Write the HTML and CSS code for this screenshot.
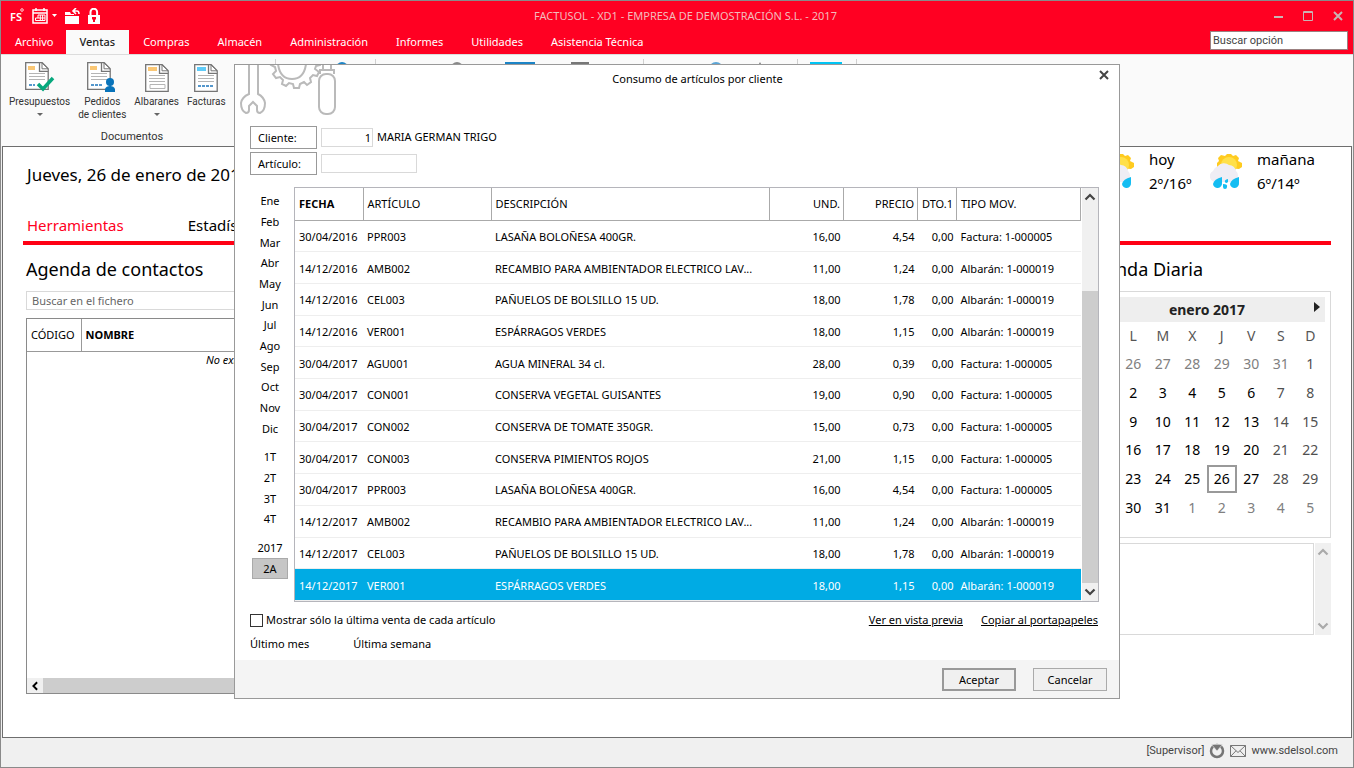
FILE: index.html
```html
<!DOCTYPE html>
<html lang="es">
<head>
  <meta charset="UTF-8">
  <meta name="viewport" content="width=device-width, initial-scale=1.0">
  <title>FACTUSOL - XD1 - EMPRESA DE DEMOSTRACIÓN S.L. - 2017</title>
  <link rel="stylesheet" href="styles.css">
</head>
<body>
  <!-- shared icon parts -->
  <svg class="defs" width="0" height="0" aria-hidden="true">
    <symbol id="doc" viewBox="0 0 24 28">
      <path d="M.7.7h16.5l6 6v20.6H.7z" fill="#fff" stroke="#757575" stroke-width="1.3"/>
      <path d="M14.5.7v8.6h8.7" fill="#fff" stroke="#757575" stroke-width="1.3"/>
      <path d="M17 1v5.8h6z" fill="#fff" stroke="#757575"/>
      <path d="M4 11.5h16M4 14.5h16M4 17.5h16" stroke="#b5b5b5" stroke-width="1"/>
    </symbol>
    <symbol id="weather" viewBox="0 0 34 36">
      <path d="M15 3l2-2h4l2 2 3-1 3 3-1 3 4 2v4l-3 2-22-2v-4l2-2-1-3 3-3z" fill="#ffcb1f"/>
      <circle cx="19" cy="12" r="8" fill="#ffe04a"/>
      <path d="M4 29a6 6 0 0 1-1-11 8 8 0 0 1 5-5 8 8 0 0 1 11-1 7 7 0 0 1 7 6 6 6 0 0 1 0 9l-4 2z" fill="#efedf4"/>
      <path d="M12 24v6a4 4 0 0 1-9 1q1-5 9-7zM29 24v6a4 4 0 0 1-9 1q1-5 9-7zM13 31q5 0 4 3a2 2 0 0 1-4 0zM18 26q-4 1-3 3t3 0z" fill="#14bdf2"/>
    </symbol>
    <symbol id="up" viewBox="0 0 8 8"><path d="M1 5.700L4 2.700l3 3" fill="none" stroke="currentColor" stroke-width="1.500"/></symbol>
    <symbol id="cross" viewBox="0 0 10 10"><path d="M1 1l8 8M9 1L1 9" stroke="currentColor" stroke-width="2"/></symbol>
  </svg>

  <header class="titlebar">
    <div class="title-row">
      <div class="quick">
        <button aria-label="Factusol"><svg width="18" height="18" viewBox="0 0 18 18"><text x="2" y="14" font-size="11" font-weight="600" fill="#fff">FS</text><circle cx="14" cy="3" r="1.300" fill="none" stroke="#fff" stroke-width=".8"/></svg></button>
        <button aria-label="Calendario"><svg width="26" height="16" viewBox="0 0 26 16"><path d="M1 2h14v13H1zM1 5h14M4 0v3M12 0v3" fill="none" stroke="#fff" stroke-width="1.500"/><path d="M3.500 12.500V10H6V7h7v5.500zM6 10h7M8.300 7v5.500M10.600 7v5.500" fill="none" stroke="#fff"/><path d="M20 6h5l-2.500 3z" fill="#fff"/></svg></button>
        <button aria-label="Cambiar empresa"><svg width="17" height="16" viewBox="0 0 17 16"><path d="M1 4h5l1 2h3v1H1zM1 8h14v8H1z" fill="#fff"/><path d="M9 3h4q2 0 2 3M12 0L9 3l3 3" fill="none" stroke="#fff" stroke-width="1.600"/></svg></button>
        <button aria-label="Bloquear"><svg width="14" height="16" viewBox="0 0 14 16"><path d="M3.500 7V4a3.300 3.300 0 0 1 6.600 0v3" fill="none" stroke="#fff" stroke-width="2"/><path d="M1 7h12v9H1z" fill="#fff"/><path d="M5 9h4v2.500H8V14H6v-2.500H5z" fill="#ff0022"/></svg></button>
      </div>
      <h1>FACTUSOL - XD1 - EMPRESA DE DEMOSTRACIÓN S.L. - 2017</h1>
      <div class="window-buttons">
        <button aria-label="Minimizar"><svg width="10" height="10"><path d="M0 6h9" stroke="currentColor" stroke-width="2"/></svg></button>
        <button aria-label="Maximizar"><svg width="11" height="10"><path d="M.5.500h9v9h-9zM0 1.500h10" fill="none" stroke="currentColor"/></svg></button>
        <button aria-label="Cerrar"><svg width="10" height="10"><use href="#cross"/></svg></button>
      </div>
    </div>
    <div class="tab-row">
      <nav class="tabs">
        <a href="#">Archivo</a>
        <a href="#" class="active">Ventas</a>
        <a href="#">Compras</a>
        <a href="#">Almacén</a>
        <a href="#">Administración</a>
        <a href="#">Informes</a>
        <a href="#">Utilidades</a>
        <a href="#">Asistencia Técnica</a>
      </nav>
      <input class="search-option" type="text" placeholder="Buscar opción" aria-label="Buscar opción">
    </div>
  </header>

  <div class="ribbon">
    <section class="group documents">
      <div class="tools">
        <button>
          <svg width="30" height="30" viewBox="0 0 30 30"><use href="#doc" width="24" height="28"/><path d="M3 4h7v4H3z" fill="#fac775"/><path d="M4 23h6" stroke="#1c75bc" stroke-width="1.500" stroke-dasharray="3 1"/><path d="M13 22l5 5 10-11" fill="none" stroke="#07a87d" stroke-width="3.500"/></svg>
          Presupuestos
          <i class="caret"></i>
        </button>
        <button>
          <svg width="30" height="30" viewBox="0 0 30 30"><use href="#doc" width="24" height="28"/><path d="M3 4h7v4H3z" fill="#fac775"/><path d="M4 23h12" stroke="#1c75bc" stroke-width="1.500" stroke-dasharray="3 1"/><circle cx="23" cy="20" r="4" fill="#0873ba"/><path d="M18 30v-3q1-3 5-3t5 3v3z" fill="#0873ba"/></svg>
          Pedidos<br>de clientes
        </button>
        <button>
          <svg width="24" height="30" viewBox="0 0 24 30"><use href="#doc" y="2" width="24" height="28"/><path d="M3 5h9v4H3z" fill="#fac775"/><path d="M5 22.500h15v4H5z" fill="#fff" stroke="#b5b5b5"/></svg>
          Albaranes
          <i class="caret"></i>
        </button>
        <button>
          <svg width="24" height="30" viewBox="0 0 24 30"><use href="#doc" y="2" width="24" height="28"/><path d="M3 5h9v4H3z" fill="#5fcbf8"/><path d="M4 24h16" stroke="#1c75bc" stroke-width="1.500" stroke-dasharray="3 1"/></svg>
          Facturas
        </button>
      </div>
      <h2>Documentos</h2>
    </section>
    <section class="group group-b"><svg width="24" height="28"><circle cx="12" cy="6" r="6" fill="#1c84c6"/></svg></section>
    <section class="group group-c">
      <svg width="24" height="28"><circle cx="12" cy="6" r="6" fill="#888"/></svg>
      <svg width="30" height="28"><path d="M0 0h30v24H0z" fill="#1c84c6"/></svg>
      <svg width="18" height="28"><path d="M0 0h18v24H0z" fill="#777"/></svg>
    </section>
    <section class="group group-d">
      <svg width="24" height="28"><circle cx="12" cy="7" r="7" fill="#5aa5d6"/></svg>
      <svg width="24" height="28"><path d="M12 0l9 20H3z" fill="#666"/></svg>
    </section>
    <section class="group group-e"><svg width="32" height="28"><path d="M0 0h32v24H0z" fill="#00c4f4"/></svg></section>
  </div>

  <main class="desktop">
    <div class="day-row">
      <p class="date">Jueves, 26 de enero de 2017</p>
      <div class="weather">
        <svg width="34" height="36"><use href="#weather"/></svg>
        <p>hoy<br>2º/16º</p>
      </div>
      <div class="weather">
        <svg width="34" height="36"><use href="#weather"/></svg>
        <p>mañana<br>6º/14º</p>
      </div>
    </div>
    <nav class="sections">
      <a href="#" class="active">Herramientas</a>
      <a href="#">Estadísticas</a>
    </nav>
    <div class="panels">
      <section class="contacts">
        <h2>Agenda de contactos</h2>
        <input type="text" placeholder="Buscar en el fichero" aria-label="Buscar en el fichero">
        <div class="contact-list">
          <table>
            <thead><tr><th class="code">CÓDIGO</th><th class="name">NOMBRE</th></tr></thead>
            <tbody><tr><td colspan="2">No existen datos para mostrar</td></tr></tbody>
          </table>
          <div class="hscroll"><svg class="left" width="10" height="10"><use href="#up"/></svg><span></span></div>
        </div>
      </section>
      <section class="diary">
        <h2>Agenda Diaria</h2>
        <div class="calendar">
          <div class="month">
            enero 2017
            <button aria-label="Mes siguiente"><svg width="6" height="10"><path d="M0 0l6 5-6 5z" fill="#222"/></svg></button>
          </div>
          <table>
            <thead><tr><th></th><th>L</th><th>M</th><th>X</th><th>J</th><th>V</th><th>S</th><th>D</th></tr></thead>
            <tbody>
              <tr><td></td><td class="out">26</td><td class="out">27</td><td class="out">28</td><td class="out">29</td><td class="out">30</td><td class="out">31</td><td class="weekend">1</td></tr>
              <tr><td></td><td>2</td><td>3</td><td>4</td><td>5</td><td>6</td><td class="weekend">7</td><td class="weekend">8</td></tr>
              <tr><td></td><td>9</td><td>10</td><td>11</td><td>12</td><td>13</td><td class="weekend">14</td><td class="weekend">15</td></tr>
              <tr><td></td><td>16</td><td>17</td><td>18</td><td>19</td><td>20</td><td class="weekend">21</td><td class="weekend">22</td></tr>
              <tr><td></td><td>23</td><td>24</td><td>25</td><td class="today">26</td><td>27</td><td class="weekend">28</td><td class="weekend">29</td></tr>
              <tr><td></td><td>30</td><td>31</td><td class="out">1</td><td class="out">2</td><td class="out">3</td><td class="out">4</td><td class="out">5</td></tr>
            </tbody>
          </table>
        </div>
        <div class="notes">
          <textarea aria-label="Notas del día"></textarea>
          <div class="vscroll"><svg width="12" height="12"><use href="#up"/></svg><svg class="down" width="12" height="12"><use href="#up"/></svg></div>
        </div>
      </section>
    </div>
  </main>

  <footer class="statusbar">
    <span>[Supervisor]</span>
    <svg width="16" height="16" viewBox="0 0 16 16"><circle cx="8" cy="8" r="6" fill="none" stroke="#757575" stroke-width="2.500"/><path d="M2.500 1.500h11L8 8z" fill="#757575" stroke="#f0f0f0" stroke-width=".6"/></svg>
    <svg width="16" height="12" viewBox="0 0 16 12"><path d="M.5.500h15v11H.5zl7.500 7 7.500-7M.5 11.500L6 5.800M15.500 11.500L10 5.800" fill="none" stroke="#777"/></svg>
    <a href="#">www.sdelsol.com</a>
  </footer>

  <div class="dialog" role="dialog" aria-labelledby="dialog-title">
    <header class="dialog-head">
      <svg width="98" height="52" viewBox="0 0 98 52" fill="none" stroke="#bababa" stroke-width="2">
        <path d="M9 0v29q-7 3-8 9 0 8 5 10 3 0 3-3v-4l4-4 4 4v4q0 3 3 3 5-2 5-10-1-6-7-9V0"/>
        <path d="M32-3l-1 3 4 2 1 4-3 3 3 4 4-1 3 3-1 4 4 2 3-3 4 1 1 4h5l1-4 4-2 3 3 4-3-1-4 3-3 4 1 2-4-4-3 1-3 4-1v-3"/>
        <path d="M38-1q2 15 14 15T66-1"/>
        <path d="M83 0v5h-3v4M91 0v5h3v4M83 5h8"/>
        <rect x="79" y="9" width="16" height="40" rx="7"/>
      </svg>
      <h2 id="dialog-title">Consumo de artículos por cliente</h2>
      <button class="close" aria-label="Cerrar"><svg width="10" height="10"><use href="#cross"/></svg></button>
    </header>

    <div class="filters">
      <button type="button">Cliente:</button>
      <input class="client" type="text" value="1" aria-label="Cliente">
      <span>MARIA GERMAN TRIGO</span>
    </div>
    <div class="filters">
      <button type="button">Artículo:</button>
      <input class="article" type="text" aria-label="Artículo">
    </div>

    <div class="content">
      <div class="periods">
        <div class="months">
          <button>Ene</button><button>Feb</button><button>Mar</button><button>Abr</button>
          <button>May</button><button>Jun</button><button>Jul</button><button>Ago</button>
          <button>Sep</button><button>Oct</button><button>Nov</button><button>Dic</button>
        </div>
        <div class="quarters">
          <button>1T</button><button>2T</button><button>3T</button><button>4T</button>
        </div>
        <div class="years">
          <button>2017</button><button class="active">2A</button>
        </div>
      </div>

      <div class="grid">
        <table>
          <colgroup><col class="c-date"><col class="c-item"><col><col class="c-num"><col class="c-num"><col class="c-disc"><col class="c-type"></colgroup>
          <thead>
            <tr><th class="sorted">FECHA</th><th>ARTÍCULO</th><th>DESCRIPCIÓN</th><th class="num">UND.</th><th class="num">PRECIO</th><th class="num">DTO.1</th><th>TIPO MOV.</th></tr>
          </thead>
          <tbody>
            <tr><td>30/04/2016</td><td>PPR003</td><td>LASAÑA BOLOÑESA 400GR.</td><td class="num">16,00</td><td class="num">4,54</td><td class="num">0,00</td><td>Factura: 1-000005</td></tr>
            <tr><td>14/12/2016</td><td>AMB002</td><td>RECAMBIO PARA AMBIENTADOR ELECTRICO LAV...</td><td class="num">11,00</td><td class="num">1,24</td><td class="num">0,00</td><td>Albarán: 1-000019</td></tr>
            <tr><td>14/12/2016</td><td>CEL003</td><td>PAÑUELOS DE BOLSILLO 15 UD.</td><td class="num">18,00</td><td class="num">1,78</td><td class="num">0,00</td><td>Albarán: 1-000019</td></tr>
            <tr><td>14/12/2016</td><td>VER001</td><td>ESPÁRRAGOS VERDES</td><td class="num">18,00</td><td class="num">1,15</td><td class="num">0,00</td><td>Albarán: 1-000019</td></tr>
            <tr><td>30/04/2017</td><td>AGU001</td><td>AGUA MINERAL 34 cl.</td><td class="num">28,00</td><td class="num">0,39</td><td class="num">0,00</td><td>Factura: 1-000005</td></tr>
            <tr><td>30/04/2017</td><td>CON001</td><td>CONSERVA VEGETAL GUISANTES</td><td class="num">19,00</td><td class="num">0,90</td><td class="num">0,00</td><td>Factura: 1-000005</td></tr>
            <tr><td>30/04/2017</td><td>CON002</td><td>CONSERVA DE TOMATE 350GR.</td><td class="num">15,00</td><td class="num">0,73</td><td class="num">0,00</td><td>Factura: 1-000005</td></tr>
            <tr><td>30/04/2017</td><td>CON003</td><td>CONSERVA PIMIENTOS ROJOS</td><td class="num">21,00</td><td class="num">1,15</td><td class="num">0,00</td><td>Factura: 1-000005</td></tr>
            <tr><td>30/04/2017</td><td>PPR003</td><td>LASAÑA BOLOÑESA 400GR.</td><td class="num">16,00</td><td class="num">4,54</td><td class="num">0,00</td><td>Factura: 1-000005</td></tr>
            <tr><td>14/12/2017</td><td>AMB002</td><td>RECAMBIO PARA AMBIENTADOR ELECTRICO LAV...</td><td class="num">11,00</td><td class="num">1,24</td><td class="num">0,00</td><td>Albarán: 1-000019</td></tr>
            <tr><td>14/12/2017</td><td>CEL003</td><td>PAÑUELOS DE BOLSILLO 15 UD.</td><td class="num">18,00</td><td class="num">1,78</td><td class="num">0,00</td><td>Albarán: 1-000019</td></tr>
            <tr class="selected"><td>14/12/2017</td><td>VER001</td><td>ESPÁRRAGOS VERDES</td><td class="num">18,00</td><td class="num">1,15</td><td class="num">0,00</td><td>Albarán: 1-000019</td></tr>
          </tbody>
        </table>
        <div class="vscroll"><svg width="12" height="12"><use href="#up"/></svg><span></span><svg class="down" width="12" height="12"><use href="#up"/></svg></div>
      </div>
    </div>

    <div class="options">
      <input type="checkbox" id="last-sale">
      <label for="last-sale">Mostrar sólo la última venta de cada artículo</label>
      <a href="#">Ver en vista previa</a>
      <a href="#">Copiar al portapapeles</a>
    </div>
    <div class="ranges">
      <button>Último mes</button>
      <button>Última semana</button>
    </div>

    <footer class="dialog-foot">
      <button class="default">Aceptar</button>
      <button>Cancelar</button>
    </footer>
  </div>
</body>
</html>
```

FILE: styles.css
```css
* {
  box-sizing: border-box;
}

body {
  margin: 0;
  min-height: 100vh;
  position: relative;
  display: flex;
  flex-direction: column;
  border: 1px solid #8a8a8a;
  background: #f0f0f0;
  color: #000;
  font-family: "Noto Sans", "Open Sans", sans-serif;
  font-size: 11px;
  line-height: 16px;
}

h1, h2, p {
  margin: 0;
  font-weight: normal;
}

button {
  padding: 0;
  border: 0;
  background: none;
  color: inherit;
  font: inherit;
}

input, textarea {
  font: inherit;
  border: 1px solid #d9d9d9;
  background: #fff;
}

a {
  color: inherit;
  text-decoration: none;
}

svg {
  display: block;
}

.defs {
  position: absolute;
}

table {
  border-collapse: collapse;
}

th {
  font-weight: normal;
}

/* title bar */
.titlebar {
  background: #ff0022;
  color: #fff;
}

.title-row {
  height: 29px;
  display: grid;
  grid-template-columns: 1fr auto 1fr;
  align-items: center;
  padding: 0 10px 0 7px;
}

.quick {
  display: flex;
  align-items: center;
  gap: 6px;
}

h1 {
  padding-left: 20px;
  font-size: 11px;
  line-height: 16px;
  color: #f3bcbc;
}

.window-buttons {
  display: flex;
  justify-content: flex-end;
  gap: 19px;
  color: #c9b3b3;
}

.tab-row {
  height: 24px;
  display: flex;
  justify-content: space-between;
  padding-right: 5px;
}

.tabs {
  display: flex;
}

.tabs a {
  padding: 4px 14px;
}

.tabs a:first-child {
  padding-right: 12px;
}

.tabs .active {
  background: #fafafa;
  color: #222;
  font-weight: 500;
}

.search-option {
  width: 138px;
  height: 19px;
  margin-top: 1px;
  padding: 0 2px;
  border-color: #9b8080;
  font-family: Roboto, sans-serif;
}

.search-option::placeholder {
  color: #444;
}

/* ribbon */
.ribbon {
  height: 92px;
  display: flex;
  padding-top: 4px;
  border-top: 1px solid #dcdcdc;
  background: #fafafa;
  color: #333;
  font-family: Roboto, sans-serif;
  font-size: 10px;
  line-height: 13px;
}

.group {
  display: flex;
  padding-top: 3px;
  border-right: 1px solid #d0d0d0;
}

.documents {
  width: 275px;
  flex-direction: column;
  justify-content: space-between;
  padding-bottom: 3px;
}

.documents h2 {
  padding-right: 12px;
  font-size: 11px;
  text-align: center;
}

.tools {
  display: flex;
  gap: 8px;
  padding-left: 8px;
  white-space: nowrap;
}

.tools button {
  display: flex;
  flex-direction: column;
  align-items: center;
  justify-content: flex-start;
}

.tools svg {
  margin-bottom: 3px;
}

.caret {
  margin-top: 5px;
  border: 3px solid transparent;
  border-top-color: #666;
}

.group-b {
  width: 100px;
  padding-left: 54px;
}

.group-c {
  width: 268px;
  padding-left: 69px;
  gap: 36px;
}

.group-d {
  width: 154px;
  padding-left: 60px;
  gap: 20px;
}

.group-e {
  width: 59px;
  padding-left: 12px;
}

/* desktop */
.desktop {
  flex: 1;
  display: flex;
  flex-direction: column;
  margin: 0 1px;
  padding: 0 20px 43px;
  border: 1px solid #6e6e6e;
  background: #fff;
}

.day-row {
  display: flex;
  align-items: flex-start;
  padding-right: 13px;
}

.date {
  flex: 1;
  padding: 16px 0 0 4px;
  font-size: 17px;
  line-height: 24px;
}

.weather {
  width: 108px;
  display: flex;
  gap: 13px;
  font-size: 15px;
  line-height: 24px;
}

.weather svg {
  margin-top: 6px;
}

.sections {
  display: flex;
  gap: 64px;
  margin-top: 12px;
  padding: 8px 4px 6px;
  border-bottom: 4px solid #ff0014;
  font-size: 15px;
  line-height: 20px;
}

.sections .active {
  color: #ff0022;
}

.panels {
  flex: 1;
  display: grid;
  grid-template-columns: 1fr 1fr 248px;
  padding-left: 3px;
}

.panels h2 {
  padding: 12px 0 10px;
  font-size: 18px;
  line-height: 24px;
}

.contacts {
  display: flex;
  flex-direction: column;
}

.contacts input {
  height: 19px;
  padding: 0 5px;
}

.contacts input::placeholder {
  color: #666;
}

.contact-list {
  flex: 1;
  display: flex;
  flex-direction: column;
  justify-content: space-between;
  margin-top: 8px;
  border: 1px solid #8a8a8a;
}

.contact-list table {
  width: 100%;
}

.contact-list th {
  height: 32px;
  padding: 0 4px;
  border-bottom: 1px solid #999;
  text-align: left;
}

.contact-list .code {
  width: 54px;
  border-right: 1px solid #999;
}

.contact-list .name {
  font-weight: bold;
}

.contact-list td {
  padding: 0 20px 0 0;
  font-style: italic;
  text-align: center;
}

.hscroll {
  height: 15px;
  display: flex;
  align-items: center;
  padding-left: 3px;
  gap: 3px;
  background: #f0f0f0;
}

.hscroll span {
  flex: 1;
  height: 15px;
  background: #cdcdcd;
}

.left {
  transform: rotate(-90deg);
}

.down {
  transform: rotate(180deg);
}

.diary {
  grid-column: 3;
}

.diary h2 {
  margin-right: 128px;
  text-align: right;
  white-space: nowrap;
}

.calendar {
  height: 247px;
  padding: 5px;
  border: 1px solid #d9d9d9;
}

.month {
  height: 25px;
  display: flex;
  align-items: center;
  justify-content: center;
  position: relative;
  background: #eee;
  color: #222;
  font-size: 14px;
  font-weight: bold;
}

.month button {
  position: absolute;
  right: 5px;
  top: 5px;
}

.calendar table {
  width: 100%;
  height: 200px;
  table-layout: fixed;
  font-size: 14px;
  text-align: center;
}

.calendar th,
.calendar td {
  height: 28px;
  padding: 0;
}

.calendar th {
  color: #555;
}

.calendar .out {
  color: #808080;
}

.calendar .weekend {
  color: #505050;
}

.calendar .today {
  outline: 2px solid #999;
  outline-offset: -2px;
}

.notes {
  display: flex;
  gap: 1px;
  margin-top: 5px;
}

.notes textarea {
  flex: 1;
  height: 92px;
  resize: none;
}

.vscroll {
  width: 16px;
  display: flex;
  flex-direction: column;
  align-items: center;
  justify-content: space-between;
  padding: 3px 0;
  background: #f0f0f0;
  color: #444;
}

.notes .vscroll {
  color: #aaa;
}

/* status bar */
.statusbar {
  height: 28px;
  display: flex;
  align-items: center;
  justify-content: flex-end;
  gap: 5px;
  margin-top: 1px;
  padding: 0 15px 5px 0;
  color: #444;
  font-family: Roboto, sans-serif;
}

/* dialog */
.dialog {
  position: absolute;
  top: 63px;
  left: 0;
  right: 0;
  width: 886px;
  max-width: 100%;
  margin: 0 auto;
  border: 1px solid #999;
  background: #fff;
}

.dialog-head {
  display: grid;
  grid-template-columns: 101px 1fr 65px;
  margin-bottom: 9px;
  padding-left: 5px;
}

.dialog-head h2 {
  padding-top: 6px;
  font-size: 11px;
  text-align: center;
}

.close {
  justify-self: end;
  align-self: start;
  margin: 5px 10px;
  color: #444;
}

.filters {
  height: 26px;
  display: flex;
  gap: 4px;
  padding-left: 15px;
}

.filters button {
  width: 67px;
  height: 23px;
  padding: 0 7px;
  border: 1px solid #999;
  text-align: left;
}

.filters input {
  height: 19px;
  margin-top: 2px;
  padding: 0 1px;
}

.filters span {
  padding-top: 3px;
}

.client {
  width: 52px;
  text-align: right;
}

.article {
  width: 96px;
}

.content {
  display: flex;
  gap: 6px;
  margin-top: 9px;
  padding: 0 20px 0 17px;
}

.periods {
  width: 36px;
  height: 388px;
  display: flex;
  flex-direction: column;
  gap: 8px;
  margin-top: 4px;
}

.periods div {
  display: grid;
  grid-auto-rows: 1fr;
}

.months {
  flex: 12 1 0;
}

.quarters {
  flex: 4 1 0;
}

.years {
  flex: 2 1 0;
}

.periods button {
  min-height: 0;
  line-height: 16px;
}

.periods .active {
  border: 1px solid #aaa;
  background: #c6c6c6;
}

.grid {
  flex: 1;
  height: 415px;
  display: flex;
  gap: 1px;
  border: 1px solid #b5b5bb;
}

.grid table {
  flex: 1;
  height: 413px;
  table-layout: fixed;
  white-space: nowrap;
}

.grid th {
  height: 32px;
  padding: 0 4px;
  border-right: 1px solid #aaa;
  border-bottom: 1px solid #aaa;
  text-align: left;
}

.grid .sorted {
  font-weight: bold;
}

.grid td {
  padding: 2px 4px 0;
  border-bottom: 1px solid #eee;
}

.grid .num {
  padding-right: 3px;
  text-align: right;
}

.c-date {
  width: 68px;
}

.c-item {
  width: 128px;
}

.c-num {
  width: 74px;
}

.c-disc {
  width: 39px;
}

.c-type {
  width: 124px;
}

.selected {
  background: #00abe4;
  color: #fff;
}

.grid .vscroll span {
  width: 16px;
  height: 292px;
  margin: auto 0 3px;
  background: #cdcdcd;
}

.options {
  display: flex;
  align-items: center;
  margin-top: 10px;
  padding: 0 21px 0 15px;
}

.options input {
  appearance: none;
  width: 13px;
  height: 13px;
  margin: 0 3px 0 0;
  border: 1px solid #333;
}

.options label {
  flex: 1;
}

.options a {
  margin-left: 18px;
  text-decoration: underline;
}

.ranges {
  display: flex;
  gap: 44px;
  margin: 8px 0;
  padding-left: 15px;
}

.dialog-foot {
  display: flex;
  justify-content: flex-end;
  gap: 17px;
  padding: 8px 12px 7px;
  background: #f4f4f4;
}

.dialog-foot button {
  width: 74px;
  height: 23px;
  border: 1px solid #aaa;
  background: #f0f0f0;
}

.dialog-foot .default {
  border: 2px solid #999;
}
```
